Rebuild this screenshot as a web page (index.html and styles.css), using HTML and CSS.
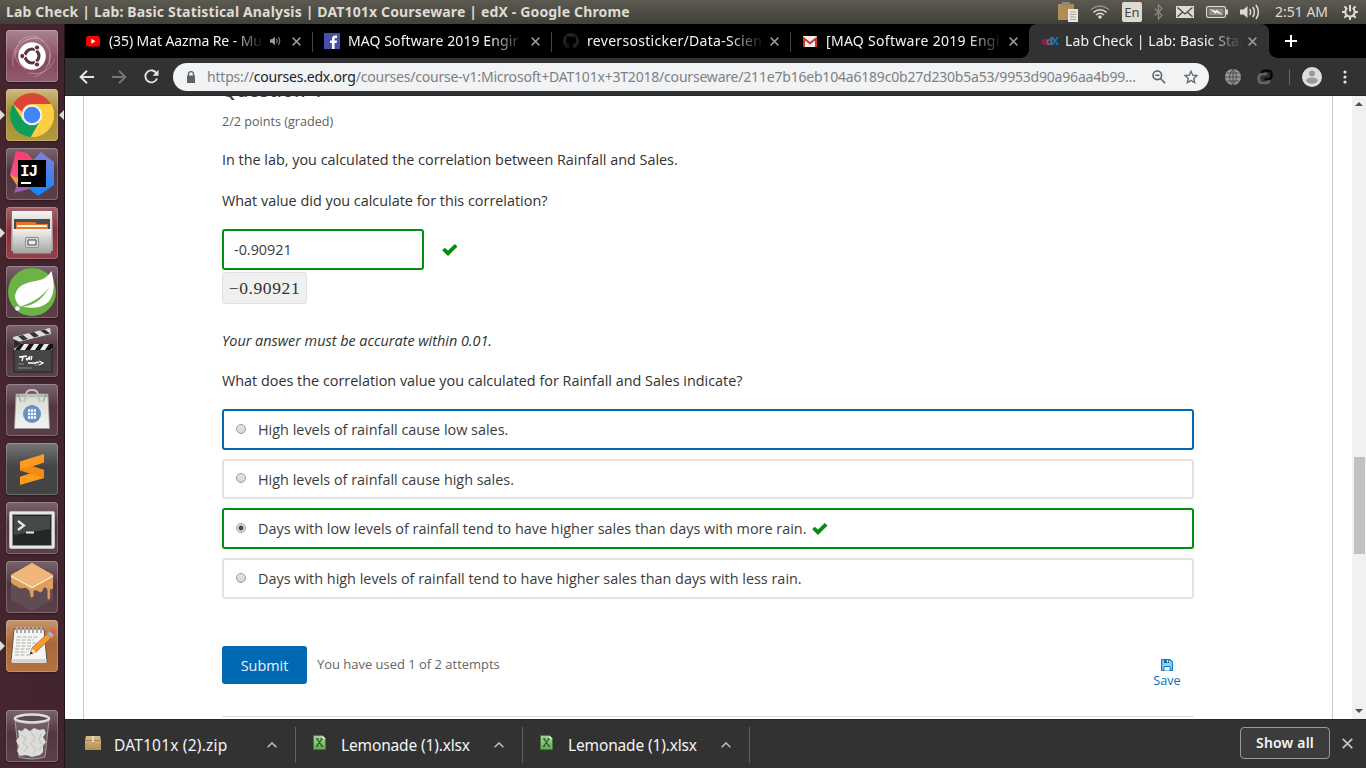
FILE: index.html
```html
<!DOCTYPE html>
<html lang="en">
<head>
<meta charset="utf-8">
<title>Lab Check | Lab: Basic Statistical Analysis | DAT101x Courseware | edX</title>
<link rel="stylesheet" href="styles.css">
</head>
<body>
<svg width="0" height="0" class="defs">
  <defs>
    <linearGradient id="grey" x1="0" y1="0" x2="0" y2="1"><stop offset="0" stop-color="#f2f2f0"/><stop offset="1" stop-color="#a3a3a1"/></linearGradient>
    <linearGradient id="bag" x1="0" y1="0" x2="0" y2="1"><stop offset="0" stop-color="#d6d8d2"/><stop offset="1" stop-color="#f3f4f0"/></linearGradient>
    <linearGradient id="ijr" x1="0" y1="0" x2="0" y2="1"><stop offset="0" stop-color="#ff3b68"/><stop offset="1" stop-color="#f0559a"/></linearGradient>
    <linearGradient id="ijb" x1="0" y1="0" x2="0" y2="1"><stop offset="0" stop-color="#7f7fd8"/><stop offset="1" stop-color="#0f86ff"/></linearGradient>
    <linearGradient id="box" x1="0" y1="0" x2="0" y2="1"><stop offset="0" stop-color="#d9bd8a"/><stop offset="1" stop-color="#b18f58"/></linearGradient>
    <linearGradient id="sheet" x1="0" y1="0" x2="0" y2="1"><stop offset="0" stop-color="#a9d59c"/><stop offset="1" stop-color="#63ad53"/></linearGradient>
    <symbol id="check" viewBox="0 0 16 12"><path d="M.2 6.200 2.700 3.700 6 6.400 12.800 0l2.700 2.600L6 12z" fill="#008f0f"/></symbol>
    <symbol id="close" viewBox="0 0 10 10"><path d="M.7.7l8.600 8.600M9.300.7L.7 9.300" fill="none" stroke="currentColor" stroke-width="1.600"/></symbol>
    <symbol id="up" viewBox="0 0 10 6"><path d="M.6 5.3 5 1l4.400 4.300" fill="none" stroke="#c0c0c0" stroke-width="1.500"/></symbol>
    <symbol id="xls" viewBox="0 0 14 16"><path d="M.5.5h9.500l3.500 3.500v11.500H.5z" fill="url(#sheet)" stroke="#3f7d35"/><path d="M10 .5l3.500 3.500H10z" fill="#eef5ec"/><path d="M4.300 4l5.500 8M9.600 4l-5.500 8M3.200 4H6M8 4h2.500M3 12h2.800M8.300 12h2.800" stroke="#2d5e26" stroke-width="1.300" fill="none"/></symbol>
  </defs>
</svg>
<div class="screen">
  <header class="panel">
    <div class="panel-title">Lab Check | Lab: Basic Statistical Analysis | DAT101x Courseware | edX - Google Chrome</div>
    <div class="tray">
      <svg class="t-clip" width="20" height="20" viewBox="0 0 20 20"><path d="M0 2h16v16H0z" fill="#b18c55"/><path d="M4 0h8v4H4z" fill="#8d8a80"/><path d="M10 7h10v13H10z" fill="#e8e6e0"/><path d="M12 10h6M12 12.500h6M12 15h6M12 17.500h6" stroke="#a9a7a0"/></svg>
      <svg class="t-wifi" width="20" height="14" viewBox="0 0 20 14" fill="none" stroke="#dfdbd2" stroke-width="1.500"><path d="M1 4.500Q10-2.500 19 4.500" stroke="#99968d"/><path d="M3.500 7.300Q10 2 16.500 7.300M6 10Q10 6.500 14 10"/><circle cx="10" cy="12" r="1" fill="#dfdbd2"/></svg>
      <div class="lang">En</div>
      <svg class="t-bt" width="9" height="16" viewBox="0 0 9 16"><path d="M.8 4.500 8 11.200 4.500 15V1L8 4.700.8 11.500" fill="none" stroke="#8b887f" stroke-width="1.200"/></svg>
      <svg class="t-mail" width="18" height="12" viewBox="0 0 18 12"><path d="M0 0h18v12H0z" fill="#dfdbd2"/><path d="M1.500 1.500 9 8l7.500-6.500M1.500 10.800l5-4.500M16.500 10.800l-5-4.500" fill="none" stroke="#4b4943" stroke-width="1.300"/></svg>
      <svg class="t-bat" width="22" height="12" viewBox="0 0 22 12"><rect x=".6" y=".6" width="18.800" height="10.800" rx="1.500" fill="none" stroke="#dfdbd2" stroke-width="1.200"/><path d="M2.500 2.500h15v7h-15z" fill="#8f8c84"/><path d="M20 3.500h2v5h-2z" fill="#dfdbd2"/><path d="M3.500 3l7 2.300L10 3.300l7 5.700-7.500-2.800.8 2.300z" fill="#f4f2ec"/></svg>
      <svg class="t-vol" width="20" height="16" viewBox="0 0 20 16"><path d="M0 5.500h3.500L7.500 2v12l-4-3.500H0z" fill="#dfdbd2"/><path d="M9.700 5q1.800 3 0 6M12.800 3q3.200 5 0 10M16 1q4.800 7 0 14" fill="none" stroke="#dfdbd2" stroke-width="1.500"/></svg>
      <div class="clock">2:51 AM</div>
      <svg class="t-gear" width="16" height="16" viewBox="0 0 16 16"><path d="M5.300 4a4.700 4.700 0 1 0 5.400 0M8 1v6.500" fill="none" stroke="#dfdbd2" stroke-width="2"/><path d="M8 13v3M3 8H0M16 8h-3M4.500 11.500l-2.200 2.200M11.500 11.500l2.200 2.200M4.500 4.500 2.400 2.400M11.500 4.500l2.100-2.100" stroke="#dfdbd2" stroke-width="2"/></svg>
    </div>
  </header>
  <div class="desktop">
    <nav class="launcher">
      <div class="tile tile-ubuntu"><svg width="52" height="52" viewBox="0 0 52 52"><g fill="none" stroke="#d9b6c3" stroke-opacity=".5"><path d="M7 36Q4 8 32 8q17 8 11 28"/><path d="M14 12q-12 16 6 28M22 43q20 4 27-14M38 12Q28 0 12 12M44 23q0 20-16 24M9 25q6-18 23-17"/></g><circle cx="26" cy="26" r="13.800" fill="#fff"/><circle cx="26" cy="26" r="7" fill="none" stroke="#5c3540" stroke-width="3.200"/><path d="M26 26h-10M26 26l5.500 9M26 26l5.500-9" stroke="#fff" stroke-width="1.300"/><g fill="#5c3540" stroke="#fff"><circle cx="16.300" cy="26" r="2.600"/><circle cx="31" cy="17.500" r="2.600"/><circle cx="31" cy="34.500" r="2.600"/></g><circle cx="26" cy="26" r="5" fill="#fff"/></svg></div>
      <div class="tile tile-chrome running focused"><svg width="52" height="52" viewBox="0 0 52 52"><circle cx="26" cy="26" r="22" fill="#ffcd40"/><path d="M6.900 15A22 22 0 0 1 45 15H26q-8 0-9.800 8z" fill="#db4437"/><path d="M6.900 15A22 22 0 0 0 25 48l9.800-17.500Q26 38 16.500 31z" fill="#0f9d58"/><path d="M34.800 31 25 48A22 22 0 0 0 45.100 15H26q10 2 10 11z" fill="#ffcd40"/><circle cx="26" cy="26" r="10.300" fill="#f4f4f4"/><circle cx="26" cy="26" r="8.300" fill="#4285f4"/></svg></div>
      <div class="tile tile-dark"><svg width="52" height="52" viewBox="0 0 52 52"><path d="M4 27l8-5v17z" fill="#fb9c26"/><path d="M10 3 21 5l9 10-16 16-10-4z" fill="url(#ijr)"/><path d="M8 45l6-18 17 12z" fill="#a25bae"/><path d="M35 4l13 10v23L32 48 20 38l7-26z" fill="url(#ijb)"/><path d="M12 12h28v27H12z" fill="#000"/><text x="14" y="28" class="ij">IJ</text><path d="M15 34h10v2H15z" fill="#fff"/></svg></div>
      <div class="tile tile-red running"><svg width="52" height="52" viewBox="0 0 52 52"><path d="M6 4h40l1 40H5z" fill="url(#grey)"/><path d="M8 12h36v13H8z" fill="#4c4c4c"/><path d="M10 15h19l2 2h11v7H10z" fill="#e6762a"/><path d="M11 18h30v2H11z" fill="#fff3df"/><path d="M7 22h38v24.500H7z" fill="url(#grey)"/><rect x="19.500" y="30.500" width="13" height="10" rx="1.500" fill="#d8d8d6" stroke="#8f8f8d"/><path d="M22 33h8v5h-8z" fill="#eee" stroke="#444"/></svg></div>
      <div class="tile tile-dark"><svg width="52" height="52" viewBox="0 0 52 52"><circle cx="26" cy="26" r="24" fill="#6ab344"/><path d="M45.500 5q5 18-1 28c-6 10-20 10-31 7Q7 33 10 26c4-9 15-10 24-12q7-2 11.500-9z" fill="#fff"/><path d="M13 41Q34 40 43 21 35 34 13 41z" fill="#6ab344"/><circle cx="11.500" cy="42.500" r="2.300" fill="#fff"/></svg></div>
      <div class="tile tile-dark"><svg width="52" height="52" viewBox="0 0 52 52"><path d="M8 20h38v27H8z" fill="#454647" stroke="#222"/><path d="M8 19h38v6H8z" fill="#eee"/><path d="M9 25l4-6h5l-4 6zM19 25l4-6h5l-4 6zM29 25l4-6h5l-4 6zM39 25l4-6h4v3l-2 3z" fill="#151515"/><path d="M7 12 44 3l1 6L8 18z" fill="#ddd"/><path d="M12 11l5-1 5 4-5 1.500zM23 8l5-1 5 4-5 1.500zM34 5.500l5-1 5 4-4 1z" fill="#333"/><path d="M7 14l9 4-8 6z" fill="#272829" stroke="#777" stroke-width=".6"/><path d="M13 32l8-1M17 32l-1 4M20 33l1 2 2-3M24 31l-1 4M26 31l-1 4M22 38h8l1-1 2 1M33 36l4 2-4 2" fill="none" stroke="#fff" stroke-width="1.300"/><path d="M12 43h14M28 40h6M12 39h6" stroke="#999" stroke-width=".8"/></svg></div>
      <div class="tile tile-dark"><svg width="52" height="52" viewBox="0 0 52 52"><path d="M10 10h32l1.500 34.500h-35z" fill="url(#bag)" stroke="#9c9f99" stroke-width=".8"/><path d="M10 12h32M12 10l3 8M40 10l-3 8" stroke="#8f918b" fill="none"/><path d="M20 11q0-5 6-5t6 5M18 18q1-7 8-7t8 7" fill="none" stroke="#c2c4bf" stroke-width="1.800"/><circle cx="26" cy="30" r="9" fill="#6b90c2"/><path d="M22 26.500h8M22 30h8M22 33.500h8" stroke="#fff" stroke-width="2.300" stroke-dasharray="2.300 .7"/></svg></div>
      <div class="tile tile-sublime"><svg width="52" height="52" viewBox="0 0 52 52"><path d="M14 18.500 38 11v8.500l-12 4 12 3.500v8L14 42v-8.300l12-4-12-3.500z" fill="#ff9a1f"/><path d="M14 26l12-3 12 4v8l-24-7.500z" fill="#f48a10"/></svg></div>
      <div class="tile tile-dark"><svg width="52" height="52" viewBox="0 0 52 52"><rect x="3.500" y="9.500" width="45" height="37" rx="1.500" fill="#e8e8e6" stroke="#bbb"/><path d="M6.500 12.500h39v31h-39z" fill="#252727" stroke="#8e8e8c"/><path d="M8 14h36v13L8 33z" fill="#454948"/><path d="M12 19l6 4.500-6 4.500M20 30.500h8" fill="none" stroke="#e8e8e8" stroke-width="2.200"/></svg></div>
      <div class="tile tile-dark"><svg width="52" height="52" viewBox="0 0 52 52"><path d="M5 15 26 26l21-11v24L26 50 5 39z" fill="#624c53"/><path d="M26 2 47 14v13q-2 3-3 0v10q-1.500 3-2.500 0V29q-2-4-4-2-1 5-4 4-4-3-6-1v5q-2 3-3 0l-1-5q-3-4-6-3-5 1-7-2-4-1-5.500-4V14z" fill="#de9e5c"/><path d="M26 2 47 14 26 26 5 14z" fill="#efb777"/><path d="M5 15 26 26.500 47 15" fill="none" stroke="#fff1dc" stroke-width="1.300"/></svg></div>
      <div class="tile tile-orange running"><svg width="52" height="52" viewBox="0 0 52 52"><path d="M8 9h30l3 33H5z" fill="#f5f5f3" stroke="#6d513a"/><path d="M5.500 39h35v4h-35z" fill="#d8d6cf"/><path d="M11 7v6M15 7v6M19 7v6M23 7v6M27 7v6M31 7v6M35 7v6" stroke="#aaa" stroke-width="2"/><path d="M11 17h22M10 20h18M10 23h20M10 26h15M9 29h16M9 32h12M9 35h15" stroke="#9b9b99" stroke-width=".8" stroke-dasharray="4 1.500"/><path d="M24 34l2-6 15-14 4 4-15 14z" fill="#f49a31" stroke="#a25c15" stroke-width=".7"/><path d="M24 34.500l2-6 4 3.500z" fill="#f7dcb0"/><path d="M24 34.500l1-3 2 2z" fill="#222"/><path d="M41 14l3-3 4 4-3 3z" fill="#aab3b9"/><path d="M44 11q3-3 5 0 1 2-1 4z" fill="#ef5350"/></svg></div>
      <div class="tile tile-dark tile-trash"><svg width="52" height="52" viewBox="0 0 52 52"><path d="M9 10h34l-4 37q-13 4-26 0z" fill="#8d8186" fill-opacity=".4" stroke="#b7adb1" stroke-width=".8"/><path d="M12 20l4 1 3-3 5 3 4-3 5 2 5-1 2 4-3 4 3 5-3 4v6l-3 3-8 2-6-2-6 1-3-5 2-5-3-5 3-4z" fill="#dcdcd9"/><path d="M15 25l5 3-3 5 5 4-4 5M25 22l4 6-4 6 5 5-3 5M35 24l-2 6 4 5-4 5" fill="none" stroke="#c6c6c2" stroke-width="1.200"/><ellipse cx="26" cy="8.500" rx="17" ry="4" fill="#5d4a51" stroke="#dededc" stroke-width="2.600"/></svg></div>
    </nav>
    <main class="browser">
      <div class="tabs">
        <div class="tab"><svg class="fav" width="16" height="16" viewBox="0 0 16 16"><rect x="1" y="3" width="14" height="10.500" rx="2.500" fill="#f00"/><path d="M6.300 5.800v5L10.500 8.300z" fill="#fff"/></svg><div class="tab-name tab-name-short">(35) Mat Aazma Re - Mu</div><svg class="speaker" width="11" height="10" viewBox="0 0 11 10"><path d="M0 3.300h2L5 .8v8.400L2 6.700H0z" fill="#999"/><path d="M6.500 2.700q1.500 2.300 0 4.600M8.500 1q2.800 4 0 8" fill="none" stroke="#999"/></svg><svg class="x" width="9" height="9"><use href="#close"/></svg></div>
        <div class="tab sep"><svg class="fav" width="16" height="16" viewBox="0 0 16 16"><path d="M0 0h16v16H0z" fill="#4650ab"/><path d="M8 16v-6H6V7.500h2V6q0-3.500 3.300-3.500H13V5h-1.300Q10.500 5 10.500 6.200v1.300H13L12.600 10h-2.100v6z" fill="#fff"/></svg><div class="tab-name">MAQ Software 2019 Engir</div><svg class="x" width="9" height="9"><use href="#close"/></svg></div>
        <div class="tab sep"><svg class="fav" width="16" height="16" viewBox="0 0 16 16"><path fill="#202326" d="M8 0C3.600 0 0 3.600 0 8c0 3.500 2.300 6.500 5.500 7.600.4.100.5-.2.500-.4v-1.400c-2.200.5-2.700-1-2.700-1-.4-.9-.9-1.200-.9-1.200-.7-.5.100-.5.100-.5.800.1 1.200.8 1.200.8.700 1.300 1.900.9 2.300.7.100-.5.300-.9.500-1.100-1.800-.2-3.600-.9-3.600-4 0-.9.300-1.600.8-2.100-.1-.2-.4-1 .1-2.100 0 0 .7-.2 2.200.8a7.500 7.500 0 0 1 4 0c1.500-1 2.200-.8 2.200-.8.400 1.100.2 1.900.1 2.100.5.600.8 1.300.8 2.100 0 3.100-1.900 3.700-3.600 3.900.3.300.5.700.5 1.500v2.300c0 .2.100.5.500.4A8 8 0 0 0 8 0z"/></svg><div class="tab-name tab-name-git">reversosticker/Data-Scien</div><svg class="x" width="9" height="9"><use href="#close"/></svg></div>
        <div class="tab sep"><svg class="fav" width="16" height="16" viewBox="0 0 16 16"><path d="M1 3h14v11H1z" fill="#eee"/><path d="M1 14V3.500L8 9l7-5.500V14h-2V7.500L8 11.500 3 7.500V14z" fill="#d9302c"/></svg><div class="tab-name tab-name-mail">[MAQ Software 2019 Engi</div><svg class="x" width="9" height="9"><use href="#close"/></svg></div>
        <div class="tab active"><div class="fav edx"><span class="e">e</span><span class="d">d</span><span class="xx">X</span></div><div class="tab-name">Lab Check | Lab: Basic Stat</div><svg class="x" width="9" height="9"><use href="#close"/></svg></div>
        <svg class="plus" width="12" height="12" viewBox="0 0 12 12"><path d="M6 0v12M0 6h12" stroke="#fff" stroke-width="2"/></svg>
      </div>
      <div class="toolbar">
        <svg class="b-back" width="15" height="14" viewBox="0 0 15 14"><path d="M15 7H2M8 .8 1.600 7 8 13.200" fill="none" stroke="#e6e6e6" stroke-width="1.900"/></svg>
        <svg class="b-fwd" width="15" height="14" viewBox="0 0 15 14"><path d="M0 7h13M7 .8 13.400 7 7 13.200" fill="none" stroke="#777" stroke-width="1.900"/></svg>
        <svg class="b-reload" width="15" height="15" viewBox="0 0 15 15"><path d="M12.700 4.600A6 6 0 1 0 13 9.500" fill="none" stroke="#e6e6e6" stroke-width="1.900"/><path d="M14.500.8v6h-6z" fill="#e6e6e6"/></svg>
        <div class="omnibox">
          <svg class="lock" width="8" height="12" viewBox="0 0 8 12"><path d="M0 4.500h8V12H0z" fill="#5f6368"/><path d="M1.500 5V3Q1.500.7 4 .7T6.500 3v2" fill="none" stroke="#5f6368" stroke-width="1.300"/></svg>
          <div class="url">https://<b>courses.edx.org</b>/courses/course-v1:Microsoft+DAT101x+3T2018/courseware/211e7b16eb104a6189c0b27d230b5a53/9953d90a96aa4b99...</div>
          <svg class="lens" width="14" height="14" viewBox="0 0 14 14" fill="none" stroke="#5f6368" stroke-width="1.600"><circle cx="5.300" cy="5.300" r="4.300"/><path d="M8.500 8.500l4.700 4.700M3.300 5.300h4"/></svg>
          <svg class="star" width="14" height="14" viewBox="0 0 14 14"><path d="M7 1.300l1.700 3.900 4.200.4-3.200 2.800 1 4.200L7 10.400l-3.700 2.200 1-4.200L1.100 5.600l4.200-.4z" fill="none" stroke="#5f6368" stroke-width="1.300"/></svg>
        </div>
        <svg class="globe" width="16" height="16" viewBox="0 0 16 16"><circle cx="8" cy="8" r="8" fill="#999"/><path d="M8 0v16M0 8h16M2 4h12M2 12h12M8 0Q1 8 8 16M8 0q7 8 0 16" fill="none" stroke="#484848" stroke-width=".9"/></svg>
        <svg class="ext" width="16" height="16" viewBox="0 0 16 16" fill="none" stroke-width="2.700"><path d="M9.500 5H5.500Q1.700 5 1.700 9.500T5.500 14h3Q12 14 12 10.500" stroke="#666"/><path d="M4.500 4Q5.500 1.700 8 1.700h3Q14.500 1.700 14.500 6T11 10H7.500" stroke="#080808"/></svg>
        <div class="bar"></div>
        <svg class="avatar" width="20" height="20" viewBox="0 0 20 20"><circle cx="10" cy="10" r="10" fill="#ddd"/><circle cx="10" cy="6.500" r="3" fill="#999"/><path d="M4 14q0-3.500 6-3.500t6 3.500q-2.500 3-6 3t-6-3z" fill="#999"/></svg>
        <svg class="dots" width="4" height="14" viewBox="0 0 4 14" fill="#e6e6e6"><circle cx="2" cy="2" r="1.600"/><circle cx="2" cy="7" r="1.600"/><circle cx="2" cy="12" r="1.600"/></svg>
      </div>
      <div class="viewport">
        <div class="course">
          <section class="problem">
            <h3>Question 4</h3>
            <div class="points">2/2 points (graded)</div>
            <p class="p1">In the lab, you calculated the correlation between Rainfall and Sales.</p>
            <p class="p2">What value did you calculate for this correlation?</p>
            <div class="answer"><div class="input">-0.90921</div><svg width="16" height="12"><use href="#check"/></svg></div>
            <div class="preview">−0.90921</div>
            <p class="p3">Your answer must be accurate within 0.01.</p>
            <p class="p4">What does the correlation value you calculated for Rainfall and Sales indicate?</p>
            <div class="choices">
              <div class="choice focus"><i class="radio"></i>High levels of rainfall cause low sales.</div>
              <div class="choice short"><i class="radio"></i>High levels of rainfall cause high sales.</div>
              <div class="choice correct"><i class="radio on"></i>Days with low levels of rainfall tend to have higher sales than days with more rain.<svg width="16" height="12"><use href="#check"/></svg></div>
              <div class="choice"><i class="radio"></i>Days with high levels of rainfall tend to have higher sales than days with less rain.</div>
            </div>
            <div class="actions">
              <div class="submit">Submit</div>
              <div class="attempts">You have used 1 of 2 attempts</div>
              <div class="save"><svg width="12" height="12" viewBox="0 0 12 12"><path d="M.6.600h8.400l2.400 2.400v8.400H.6z" fill="#8fd0f7" stroke="#1b7fc6" stroke-width="1.200"/><path d="M3 .5h5v3.500H3z" fill="#0b6db7"/><path d="M5.800 1.200h1.400v2H5.800z" fill="#fff"/><path d="M3 11.500V7.500h6v4" fill="#fff" stroke="#1b7fc6"/></svg>Save</div>
            </div>
          </section>
        </div>
        <div class="scrollbar"><svg class="s-up" width="8" height="4"><path d="M0 4l4-4 4 4z" fill="#505050"/></svg><div class="thumb"></div><svg class="s-down" width="8" height="4"><path d="M0 0h8L4 4z" fill="#505050"/></svg></div>
      </div>
      <footer class="downloads">
        <div class="dl dl-zip"><svg class="dl-icon" width="16" height="14" viewBox="0 0 16 14"><path d="M1 0h14l1 4v10H0V4z" fill="url(#box)"/><path d="M0 4.500h16" stroke="#a68757"/><path d="M7 0h2v6H7z" fill="#ead9b5"/></svg><span class="dl-name dl-name-zip">DAT101x (2).zip</span><svg class="chev" width="10" height="6"><use href="#up"/></svg></div>
        <div class="dl"><svg class="dl-icon" width="13" height="15"><use href="#xls"/></svg><span class="dl-name">Lemonade (1).xlsx</span><svg class="chev" width="10" height="6"><use href="#up"/></svg></div>
        <div class="dl"><svg class="dl-icon" width="13" height="15"><use href="#xls"/></svg><span class="dl-name">Lemonade (1).xlsx</span><svg class="chev" width="10" height="6"><use href="#up"/></svg></div>
        <div class="show-all">Show all</div>
        <svg class="dl-close" width="11" height="11"><use href="#close"/></svg>
      </footer>
    </main>
  </div>
</div>
</body>
</html>
```
FILE: styles.css
```css
* { box-sizing: border-box; }
body { margin: 0; font-family: "Open Sans", sans-serif; overflow: hidden; }
svg { display: block; flex: none; }
.defs { position: absolute; }
.screen { width: 1366px; height: 768px; display: flex; flex-direction: column; overflow: hidden; }

/* system panel */
.panel { height: 24px; display: flex; justify-content: space-between; padding-left: 6px; background: linear-gradient(#5c5a50, #403f3a); color: #dfdbd2; font-family: "Noto Sans", sans-serif; white-space: nowrap; }
.panel-title { font-size: 14px; font-weight: 700; line-height: 24px; letter-spacing: .155px; }
.tray { width: 308px; display: flex; align-items: center; font-size: 14px; }
.t-wifi { margin-left: 12px; }
.lang { width: 20px; height: 20px; margin-left: 12px; border-radius: 2px; background: #dfdbd2; color: #45443d; line-height: 20px; text-align: center; font-size: 13px; }
.t-bt { margin-left: 12px; }
.t-mail { margin-left: 13px; }
.t-bat { margin-left: 12px; }
.t-vol { margin-left: 12px; }
.clock { width: 55px; margin-left: 15px; line-height: 24px; letter-spacing: 0; }
.t-gear { margin-left: 12px; }

.desktop { flex: 1; min-height: 0; display: flex; }

/* launcher */
.launcher { width: 65px; display: flex; flex-direction: column; gap: 7px; padding: 6px 0 0 6px; background: linear-gradient(90deg, #45262f, #42242e); border-right: 1px solid #231419; }
.tile { position: relative; width: 52px; height: 52px; flex: none; border-radius: 4px; box-shadow: inset 0 0 0 1px rgba(255,255,255,.22), 0 1px 2px rgba(0,0,0,.35); }
.tile-ubuntu { background: linear-gradient(#a98492, #86485e 60%, #935b70); }
.tile-chrome { background: linear-gradient(#cdbb7e, #a58a34 45%, #b39a3e); }
.tile-dark { background: linear-gradient(#7a656d, #53353f 45%, #5b404a); }
.tile-red { background: linear-gradient(#a3636c, #852f3b 45%, #93404a); }
.tile-sublime { background: linear-gradient(#777, #454545 45%, #434343); }
.tile-orange { background: linear-gradient(#c79570, #a9683a 45%, #b3733f); }
.tile-trash { margin-top: 31px; }
.running::before { content: ""; position: absolute; left: -6px; top: 21px; border: 5px solid transparent; border-left-color: #dcdcdc; border-right-width: 0; }
.focused::after { content: ""; position: absolute; right: -6px; top: 21px; border: 5px solid transparent; border-right-color: #dcdcdc; border-left-width: 0; }
.ij { font: 700 16px "Liberation Mono", monospace; fill: #fff; letter-spacing: -1px; }

/* browser chrome */
.browser { flex: 1; min-width: 0; display: flex; flex-direction: column; background: #323232; }
.tabs { height: 34px; flex: none; display: flex; background: #000; padding-left: 8px; }
.tab { position: relative; width: 239px; display: flex; align-items: center; padding: 0 11px 0 12px; color: #f4f4f4; font: 14px/34px "Noto Sans", sans-serif; }
.sep::before { content: ""; position: absolute; left: 0; top: 8px; height: 20px; width: 1px; background: #444; }
.fav { margin-right: 8px; width: 16px; }
.tab-name { width: 177px; height: 34px; overflow: hidden; white-space: nowrap; letter-spacing: .1px; -webkit-mask: linear-gradient(90deg, #000 80%, transparent 100%); mask: linear-gradient(90deg, #000 80%, transparent 100%); }
.tab-name-short { width: 155px; letter-spacing: -.1px; }
.tab-name-git { letter-spacing: .3px; }
.tab-name-mail { letter-spacing: .3px; }
.speaker { margin-left: 6px; }
.x { margin-left: auto; color: #999; }
.active { width: 240px; padding-right: 12px; background: #323232; border-radius: 8px 8px 0 0; }
.active::before { content: ""; position: absolute; left: -8px; bottom: 0; width: 8px; height: 8px; background: radial-gradient(circle at 0 0, transparent 7.5px, #323232 8px); }
.active::after { content: ""; position: absolute; right: -8px; bottom: 0; width: 8px; height: 8px; background: radial-gradient(circle at 100% 0, transparent 7.5px, #323232 8px); }
.edx { font: 700 11px/16px "Open Sans", sans-serif; letter-spacing: -1.5px; white-space: nowrap; }
.e { color: #b5095b; }
.d { color: #66717a; }
.xx { color: #0b78d0; }
.plus { margin: 11px 0 0 16px; }
.toolbar { height: 38px; flex: none; display: flex; align-items: center; padding-left: 14px; border-bottom: 1px solid #262626; }
.b-fwd { margin-left: 18px; }
.b-reload { margin-left: 17px; }
.omnibox { width: 1036px; height: 28px; margin-left: 14px; border-radius: 14px; background: #f1f3f4; display: flex; align-items: center; padding-left: 14px; }
.url { width: 933px; margin-left: 12px; white-space: nowrap; font: 14px/28px "Noto Sans", sans-serif; letter-spacing: -.2px; color: #7d8186; }
.url b { font-weight: 400; color: #202124; }
.lens { margin-left: 12px; }
.star { margin-left: 18px; }
.globe { margin-left: 16px; }
.ext { margin-left: 16px; }
.bar { width: 1px; height: 16px; margin-left: 16px; background: #666; }
.avatar { margin-left: 12px; }
.dots { margin-left: 21px; }

/* course page */
.viewport { flex: 1; min-height: 0; display: flex; background: #fff; overflow: hidden; }
.course { width: 1250px; margin: 0 19px 0 18px; border: solid #c8c8c8; border-width: 0 1px; padding: 0 138px; color: #313131; font-size: 14.4px; }
.problem { height: 639px; border-bottom: 1px solid #ddd; }
.problem p, .problem h3 { margin: 0; white-space: nowrap; }
.problem p { height: 20px; line-height: 20px; }
.problem h3 { margin-top: -18px; height: 24px; font-size: 18px; line-height: 24px; font-weight: 600; color: #414141; letter-spacing: .6px; }
.points { margin-top: 10px; height: 20px; font-size: 12.6px; line-height: 20px; color: #5e5e5e; }
.problem .p1 { margin-top: 18px; }
.problem .p2 { margin-top: 21px; }
.answer { height: 41px; margin-top: 18px; display: flex; align-items: center; gap: 18px; }
.input { width: 202px; height: 41px; border: 2px solid #008f0f; border-radius: 3px; padding-left: 10px; line-height: 37px; color: #3c3c3c; }
.preview { width: 85px; height: 32px; margin-top: 2px; border: 1px solid #e0e0e0; border-radius: 3px; background: #f0f0f0; font: 17.5px/30px "Liberation Serif", serif; letter-spacing: .6px; text-align: center; }
.problem .p3 { margin-top: 27px; font-style: italic; }
.problem .p4 { margin-top: 20px; }
.choices { margin-top: 18px; display: flex; flex-direction: column; gap: 9px; }
.choice { height: 41px; border: 2px solid #e2e2e2; border-radius: 3px; display: flex; align-items: center; padding-left: 12px; color: #3c3c3c; white-space: nowrap; letter-spacing: .008px; }
.choice svg { margin-left: 5px; }
.short { height: 40px; }
.focus { border-color: #0069b4; }
.correct { border-color: #008f0f; }
.radio { width: 10px; height: 10px; margin: 0 12px 2px 0; border: 1px solid #9c9c9c; border-radius: 50%; background: linear-gradient(#e6e6e6, #d4d4d4); }
.on { background: radial-gradient(circle, #4b4b4b 2px, #e6e6e6 3px); }
.actions { margin-top: 47px; display: flex; height: 44px; }
.submit { width: 85px; height: 38px; border-radius: 3px; background: #0069b4; color: #e9f2f8; font-size: 14.4px; line-height: 39px; text-align: center; }
.attempts { margin-left: 10px; line-height: 37px; font-size: 12.96px; color: #666; }
.save { margin: 13px 13px 0 auto; width: 28px; display: flex; flex-direction: column; align-items: center; color: #0b6db7; font-size: 12.6px; line-height: 20px; }
.scrollbar { width: 14px; background: #f1f1f1; display: flex; flex-direction: column; align-items: center; }
.s-up { margin-top: 6px; }
.thumb { width: 11px; height: 97px; margin-top: 351px; background: #c1c1c1; }
.s-down { margin-top: 155px; }

/* downloads shelf */
.downloads { height: 49px; flex: none; display: flex; align-items: center; border-top: 1px solid #282828; color: #f4f4f4; font: 15.500px/24px "Noto Sans", sans-serif; }
.dl { width: 227px; height: 36px; margin-top: 2px; padding: 0 18px 0 17px; border-right: 1px solid #626262; display: flex; align-items: center; white-space: nowrap; }
.dl-zip { width: 231px; padding-left: 20px; }
.dl-icon { margin: -5px 15px 0 0; }
.dl-zip .dl-icon { margin-right: 13px; }
.dl-name { letter-spacing: -.15px; }
.dl-name-zip { letter-spacing: .2px; }
.chev { margin-left: auto; }
.show-all { width: 90px; height: 32px; margin: -2px 0 0 auto; border: 1px solid #999; border-radius: 4px; background: #3c3c3c; text-align: center; font-size: 14px; font-weight: 600; line-height: 29px; letter-spacing: .2px; }
.dl-close { margin: -1px 13px 0 12px; color: #c4c4c4; }
```
